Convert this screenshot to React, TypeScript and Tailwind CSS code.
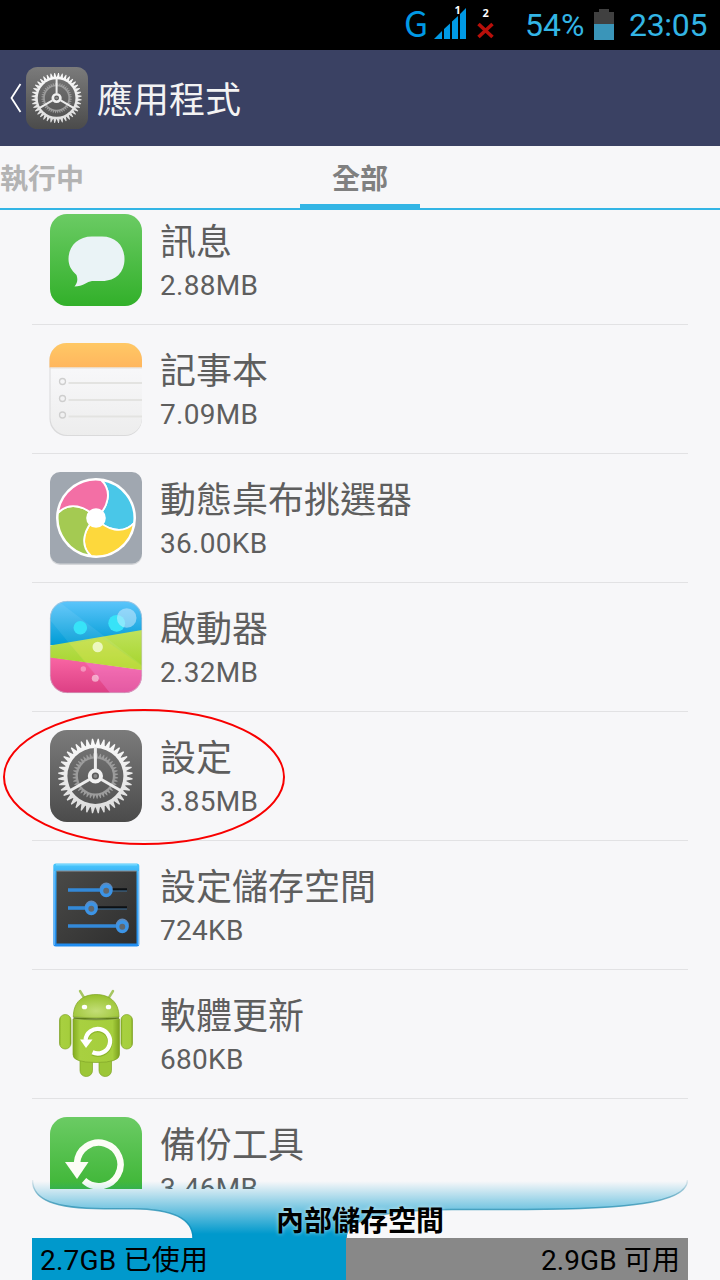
import React from "react";

interface IconProps {
  className?: string;
}

interface AppEntry {
  name: string;
  size: string;
  Icon: React.FC<IconProps>;
}

// Points of a ring of pointed gear teeth around (46, 46)
const gearPoints = (teeth: number, tip: number, root: number) => {
  const points: string[] = [];
  const at = (r: number, step: number) => {
    const a = (step / teeth) * Math.PI * 2 - Math.PI / 2;
    points.push(`${(46 + r * Math.cos(a)).toFixed(2)},${(46 + r * Math.sin(a)).toFixed(2)}`);
  };
  for (let i = 0; i < teeth; i++) {
    at(root, i + 0.08);
    at(tip, i + 0.4);
    at(tip, i + 0.6);
    at(root, i + 0.92);
  }
  return points.join(" ");
};

const SettingsIcon: React.FC<IconProps> = ({ className }) => (
  <svg className={className} viewBox="0 0 92 92">
    <defs>
      <linearGradient id="gear-bg" x1="0" y1="0" x2="0" y2="1">
        <stop offset="0" stopColor="#7b7b7b" />
        <stop offset="1" stopColor="#4b4b4b" />
      </linearGradient>
      <linearGradient id="gear-fg" x1="0" y1="0" x2="0" y2="1">
        <stop offset="0" stopColor="#fafafa" />
        <stop offset="1" stopColor="#dcdcdc" />
      </linearGradient>
      <mask id="gear-ring">
        <rect width="92" height="92" fill="white" />
        <circle cx="46" cy="46" r="28" fill="black" />
      </mask>
      <mask id="gear-inner-ring">
        <rect width="92" height="92" fill="white" />
        <circle cx="46" cy="46" r="17.5" fill="black" />
      </mask>
    </defs>
    <rect width="92" height="92" rx="17" fill="url(#gear-bg)" />
    <g transform="translate(-0.6 0)">
      <polygon points={gearPoints(40, 22.8, 19.5)} fill="#9c9c9c" mask="url(#gear-inner-ring)" />
      <polygon points={gearPoints(40, 37.3, 31.5)} fill="url(#gear-fg)" mask="url(#gear-ring)" />
      <g stroke="#ececec" strokeWidth="3">
        <path d="M46 39V17" />
        <path d="M46 39V17" transform="rotate(120 46 46)" />
        <path d="M46 39V17" transform="rotate(240 46 46)" />
      </g>
      <circle cx="46" cy="46" r="5.6" fill="#5c5c5c" stroke="#f1f1f1" strokeWidth="4" />
      <circle cx="46" cy="46" r="2" fill="#8a8a8a" />
    </g>
  </svg>
);

const MessageIcon: React.FC<IconProps> = ({ className }) => (
  <svg className={className} viewBox="0 0 92 92">
    <defs>
      <linearGradient id="green-bg" x1="0" y1="0" x2="0" y2="1">
        <stop offset="0" stopColor="#6bcb64" />
        <stop offset="1" stopColor="#32b02a" />
      </linearGradient>
    </defs>
    <rect width="92" height="92" rx="17" fill="url(#green-bg)" />
    <path
      d="M42 22.5H52C66 22.5 74.5 32 74.5 45C74.5 58 66 67 52 67H42C37 67.5 33 72.5 24.5 72.5C27.5 69 28 65 26.5 61C21 56 18.5 51 18.5 45C18.5 32 28 22.5 42 22.5Z"
      fill="#eaf3f6"
    />
  </svg>
);

const NotesIcon: React.FC<IconProps> = ({ className }) => (
  <svg className={className} viewBox="0 0 92 92">
    <defs>
      <clipPath id="notes-clip">
        <rect x="-0.5" width="92.5" height="93" rx="17" />
      </clipPath>
      <linearGradient id="notes-top" x1="0" y1="0" x2="0" y2="1">
        <stop offset="0" stopColor="#ffc865" />
        <stop offset="1" stopColor="#ffb65e" />
      </linearGradient>
      <linearGradient id="notes-paper" x1="0" y1="0" x2="0" y2="1">
        <stop offset="0.25" stopColor="#f8f8fa" />
        <stop offset="1" stopColor="#ededed" />
      </linearGradient>
    </defs>
    <g clipPath="url(#notes-clip)">
      <rect x="-1" width="93" height="93" fill="#dadadb" />
      <rect x="0.5" y="-1" width="91.5" height="93" rx="17" fill="url(#notes-paper)" />
      <rect x="-1" width="93" height="24.5" fill="url(#notes-top)" />
      <path d="M0 25H92" stroke="#e3dfdb" strokeWidth="1" />
      {[38.5, 55.5, 72].map((y) => (
        <g key={y} fill="none">
          <path d={`M18.5 ${y + 1.5}H92`} stroke="#e3e3e1" strokeWidth="2" />
          <circle cx="12.5" cy={y} r="3" stroke="#cecece" strokeWidth="1.3" />
        </g>
      ))}
    </g>
  </svg>
);

const WallpaperIcon: React.FC<IconProps> = ({ className }) => (
  <svg className={className} viewBox="0 0 92 92">
    <rect y="1" width="92" height="92" rx="10" fill="#d5d7da" />
    <rect width="92" height="91.5" rx="10" fill="#a0a7b0" />
    <circle cx="46" cy="46" r="40" fill="#ffffff" />
    {["#49c7e8", "#fdd83c", "#a4ca52", "#f36fa5"].map((color, i) => (
      <path
        key={color}
        d="M46 46C58 36 63 19 51 8A38.5 38.5 0 0 1 84 51C73 63 56 58 46 46Z"
        fill={color}
        stroke="#ffffff"
        strokeWidth="1.8"
        transform={`rotate(${i * 90} 46 46)`}
      />
    ))}
    <circle cx="46" cy="46" r="9.8" fill="#ffffff" />
  </svg>
);

const LauncherIcon: React.FC<IconProps> = ({ className }) => (
  <svg className={className} viewBox="0 0 92 92">
    <defs>
      <clipPath id="launcher-clip">
        <rect width="92" height="92" rx="17" />
      </clipPath>
      <linearGradient id="launcher-blue" x1="0" y1="0" x2="0" y2="1">
        <stop offset="0" stopColor="#5cc5fb" />
        <stop offset="1" stopColor="#009cd5" />
      </linearGradient>
      <linearGradient id="launcher-green" x1="0" y1="0" x2="0" y2="1">
        <stop offset="0" stopColor="#bfe25c" />
        <stop offset="1" stopColor="#a4d42a" />
      </linearGradient>
      <linearGradient id="launcher-pink" x1="0" y1="0" x2="0" y2="1">
        <stop offset="0" stopColor="#f966a4" />
        <stop offset="1" stopColor="#dc3f84" />
      </linearGradient>
    </defs>
    <g clipPath="url(#launcher-clip)">
      <rect width="92" height="44" fill="url(#launcher-blue)" />
      <path d="M0 56L92 69V92H0Z" fill="url(#launcher-pink)" />
      <path d="M0 44.5L92 29V69L0 56.5Z" fill="url(#launcher-green)" />
      <path d="M0 0H8L92 64V92H60L0 19Z" fill="#ffffff" opacity="0.08" />
      <path d="M20 43L52 37L92 65V69L36 61.5Z" fill="#e9e339" opacity="0.25" />
      <path d="M36 61.5L92 69V92H60Z" fill="#f37be0" opacity="0.25" />
      <circle cx="30.3" cy="26.7" r="6.8" fill="#37e3f8" />
      <circle cx="66.7" cy="22.3" r="8.4" fill="#37e3f8" />
      <circle cx="76.7" cy="17" r="9.8" fill="#d9f0ff" opacity="0.5" />
      <circle cx="47.7" cy="46" r="5.2" fill="#f3fbd3" opacity="0.85" />
      <circle cx="33.3" cy="68" r="2.7" fill="#ffffff" opacity="0.35" />
      <circle cx="45.3" cy="77.3" r="3.5" fill="#ffffff" opacity="0.5" />
    </g>
    <rect x="0.3" y="0.3" width="91.4" height="91.4" rx="17" fill="none" stroke="#c9c4d2" strokeWidth="0.6" />
  </svg>
);

const StorageSettingsIcon: React.FC<IconProps> = ({ className }) => (
  <svg className={className} viewBox="0 0 92 92">
    <defs>
      <linearGradient id="panel-bg" x1="0" y1="0" x2="1" y2="1">
        <stop offset="0" stopColor="#4a4a48" />
        <stop offset="1" stopColor="#2e2e2e" />
      </linearGradient>
      <linearGradient id="panel-frame" x1="0" y1="0" x2="0" y2="1">
        <stop offset="0" stopColor="#4cc9fb" />
        <stop offset="0.15" stopColor="#35a8f5" />
        <stop offset="1" stopColor="#1f8cf0" />
      </linearGradient>
    </defs>
    <rect x="3.3" y="4.5" width="86" height="83" rx="2.5" fill="url(#panel-frame)" />
    <path d="M6 5.8H87" stroke="#74d6ff" strokeWidth="1.5" />
    <path d="M4.2 12V86M88.4 12V86" stroke="#7cc0f5" strokeWidth="1" />
    <rect x="6.5" y="12" width="80" height="72.5" fill="url(#panel-bg)" />
    <path d="M6.5 12H86.5" stroke="#8b9299" strokeWidth="1.2" />
    {[
      { y: 31, x: 56.2 },
      { y: 49, x: 41.3 },
      { y: 67, x: 72.3 },
    ].map(({ y, x }) => (
      <g key={y} fill="none">
        <path d={`M${x} ${y - 0.5}H77`} stroke="#0d1114" strokeWidth="2.5" />
        <path d={`M${x} ${y + 1}H77`} stroke="#3a6c96" strokeWidth="1" />
        <path d={`M18 ${y}H${x}`} stroke="#3389d8" strokeWidth="3.6" />
        <circle cx={x} cy={y - 1} r="4.9" stroke="#6088b8" strokeWidth="3.2" />
        <circle cx={x} cy={y + 0.7} r="4.7" fill="#62686e" stroke="#3c94e6" strokeWidth="3.5" />
      </g>
    ))}
  </svg>
);

const SoftwareUpdateIcon: React.FC<IconProps> = ({ className }) => (
  <svg className={className} viewBox="0 0 92 92">
    <defs>
      <linearGradient id="robot-body" x1="0" y1="0" x2="1" y2="0">
        <stop offset="0" stopColor="#83ab20" />
        <stop offset="0.15" stopColor="#a8d040" />
        <stop offset="0.85" stopColor="#a5ce3c" />
        <stop offset="1" stopColor="#7ba01d" />
      </linearGradient>
      <radialGradient id="robot-head" cx="0.5" cy="0.7" r="0.7">
        <stop offset="0" stopColor="#c3de77" />
        <stop offset="1" stopColor="#96c02b" />
      </radialGradient>
    </defs>
    <path d="M30 3L34 9.5M63 3L59 9.5" stroke="#a6c662" strokeWidth="2.4" strokeLinecap="round" />
    <g stroke="#7fa326" strokeWidth="0.7">
      <rect x="30" y="65.5" width="12.5" height="23" rx="6" fill="#9cc637" />
      <rect x="49" y="65.5" width="12.5" height="23" rx="6" fill="#9cc637" />
      <rect x="9.5" y="26.5" width="11.5" height="34.5" rx="5.7" fill="url(#robot-body)" />
      <rect x="71" y="26.5" width="11.5" height="34.5" rx="5.7" fill="url(#robot-body)" />
      <path d="M23.3 29C23.3 13.5 33 6.5 46 6.5S69 13.5 69 29Q46 31 23.3 29Z" fill="url(#robot-head)" />
      <path d="M23 31Q46 33 69.5 31V66.5Q69.5 74.5 46 74.5T23 66.5Z" fill="url(#robot-body)" />
    </g>
    <path d="M23.5 30Q46 32 69 30" stroke="#5f7f18" strokeWidth="1.4" fill="none" />
    <ellipse cx="34.5" cy="19" rx="2.7" ry="2.3" fill="#ffffff" />
    <ellipse cx="58.5" cy="19" rx="2.7" ry="2.3" fill="#ffffff" />
    <path d="M35.5 53A12.3 12.3 0 1 1 42.5 65.3" fill="none" stroke="#6d9715" strokeWidth="5" opacity="0.45" />
    <path d="M35.5 52A12.3 12.3 0 1 1 42.5 64.3" fill="none" stroke="#ffffff" strokeWidth="4.3" />
    <path d="M30 51.5H42.5L36 60Z" fill="#ffffff" />
  </svg>
);

const BackupIcon: React.FC<IconProps> = ({ className }) => (
  <svg className={className} viewBox="0 0 92 92">
    <rect width="92" height="92" rx="17" fill="url(#green-bg)" />
    <path d="M27 46A21.8 21.8 0 1 1 34 63.5" fill="none" stroke="#fcfdf6" strokeWidth="6.5" />
    <path d="M15 45H38.5L27 62Z" fill="#fcfdf6" />
  </svg>
);

const APPS: AppEntry[] = [
  { name: "訊息", size: "2.88MB", Icon: MessageIcon },
  { name: "記事本", size: "7.09MB", Icon: NotesIcon },
  { name: "動態桌布挑選器", size: "36.00KB", Icon: WallpaperIcon },
  { name: "啟動器", size: "2.32MB", Icon: LauncherIcon },
  { name: "設定", size: "3.85MB", Icon: SettingsIcon },
  { name: "設定儲存空間", size: "724KB", Icon: StorageSettingsIcon },
  { name: "軟體更新", size: "680KB", Icon: SoftwareUpdateIcon },
  { name: "備份工具", size: "3.46MB", Icon: BackupIcon },
];

const StatusBar: React.FC = () => (
  <div className="flex h-[50px] shrink-0 items-center bg-black pl-[403px] text-[32px] leading-[52px] text-[#33b5e5]">
    <span className="h-[50px] w-[31px] pl-px font-['Noto_Sans_CJK_TC'] text-[35px] leading-[43px] text-[#0099e5]">G</span>
    <svg className="h-[50px] w-[70px]" viewBox="0 0 70 50">
      <path d="M0 39L8 31V39ZM10 29L16 23.5V39H10ZM18 21.5L24 16V39H18ZM26 14L32 8V39H26Z" fill="#0099e5" />
      <path d="M44.5 24L58.5 37M58.5 24L44.5 37" stroke="#b80f0a" strokeWidth="3.6" />
      <g fill="#ffffff" fontFamily="Open Sans" fontWeight="700" fontSize="11">
        <text x="20.5" y="14" stroke="#000000" strokeWidth="1.5" paintOrder="stroke">1</text>
        <text x="48.5" y="17">2</text>
      </g>
    </svg>
    <span className="ml-[21px] w-[69px]">54%</span>
    <svg className="h-[50px] w-5" viewBox="0 0 20 50">
      <path d="M0 12H5V9H15V12H20V24H0Z" fill="#404040" />
      <path d="M0 24H20V40H0Z" fill="#3a95b9" />
    </svg>
    <span className="ml-[15px] tracking-[-0.3px]">23:05</span>
  </div>
);

const Header: React.FC = () => (
  <div className="flex h-24 shrink-0 items-center bg-[#3a4163] pl-2.5">
    <svg className="h-[30px] w-4" viewBox="0 0 16 30" fill="none" stroke="#ffffff" strokeWidth="1.8">
      <path d="M10.5 1L1.5 15L10.5 29" />
    </svg>
    <SettingsIcon className="h-[62px] w-[62px]" />
    <h1 className="ml-[9px] pt-[5px] text-[36px] leading-[48px] text-[#f3f3f3]">應用程式</h1>
  </div>
);

const Tabs: React.FC = () => (
  <div className="flex h-16 shrink-0 border-b-2 border-[#33b5e5] text-[28px] leading-[68px] font-bold">
    <div className="w-[300px] text-[#b3b3b3]">執行中</div>
    <div className="h-[62px] w-[120px] border-b-4 border-[#33b5e5] text-center text-[#808080]">全部</div>
  </div>
);

const AppRow: React.FC<{ app: AppEntry }> = ({ app }) => (
  <li className="flex h-[129px] items-center border-b border-[#e2e2e4] pl-[18px]">
    <app.Icon className="h-[92px] w-[92px] shrink-0 overflow-visible" />
    <div className="ml-[18px] pt-[5px] text-[#5e5e5e]">
      <div className="text-[36px] leading-[46px]">{app.name}</div>
      <div className="text-[28px] leading-[40px] tracking-[0.3px]">{app.size}</div>
    </div>
  </li>
);

const StorageBar: React.FC = () => (
  <div className="relative mx-8 -mt-[9px] shrink-0">
    <div className="grid h-[58px]">
      <svg className="col-start-1 row-start-1 h-[58px] w-[656px]" viewBox="0 0 656 58">
        <defs>
          <linearGradient id="swoosh" x1="0" y1="0" x2="0" y2="58" gradientUnits="userSpaceOnUse">
            <stop offset="0.02" stopColor="#0099cc" stopOpacity="0" />
            <stop offset="0.93" stopColor="#0099cc" />
          </linearGradient>
          <linearGradient id="swoosh-edge" x1="0" y1="0" x2="0" y2="58" gradientUnits="userSpaceOnUse">
            <stop offset="0" stopColor="#2c7d9c" stopOpacity="0.1" />
            <stop offset="0.4" stopColor="#2c8dae" stopOpacity="0.7" />
            <stop offset="1" stopColor="#0090c2" />
          </linearGradient>
        </defs>
        <path
          d="M0 0C0 20 22 28.5 72 28.7H101C140 29 161 38 161 58H314C314 42 340 30 420 29.5H494C590 29 656 24 656 0Z"
          fill="url(#swoosh)"
        />
        <g fill="none" stroke="url(#swoosh-edge)" strokeWidth="1.5">
          <path d="M0.5 0C0.5 20 22 28.5 72 28.7H101C140 29 161 38 161 58" />
          <path d="M314 58C314 42 340 30 420 29.5H494C590 29 655.5 24 655.5 0" />
        </g>
      </svg>
      <div className="col-start-1 row-start-1 mt-[22px] h-9 text-center text-[28px] leading-[40px] font-bold text-black [text-shadow:0_0_4px_#ffffff99]">
        內部儲存空間
      </div>
    </div>
    <div className="flex h-[42px] bg-[#888888] text-[28px] leading-[46px] text-black">
      <div className="w-[314px] bg-[#0099cc] pl-2 tracking-[0.2px]">2.7GB 已使用</div>
      <div className="flex-1 pr-2 text-right tracking-[0.1px]">2.9GB 可用</div>
    </div>
  </div>
);

const App: React.FC = () => (
  <div className="relative flex h-[1280px] w-[720px] flex-col overflow-hidden bg-[#f7f7f9] font-[Roboto,'Noto_Sans_CJK_TC',sans-serif]">
    <StatusBar />
    <Header />
    <Tabs />
    <div className="h-[979px] shrink-0 overflow-hidden px-8">
      <ul className="-mt-3.5">
        {APPS.map((app) => (
          <AppRow key={app.name} app={app} />
        ))}
      </ul>
    </div>
    <StorageBar />

    {/* Hand-drawn marker around the settings entry */}
    <svg className="absolute top-[707px] left-0 h-[140px] w-[290px]" viewBox="0 0 290 140" fill="none">
      <ellipse cx="144" cy="70" rx="140" ry="67" stroke="#f80000" strokeWidth="2" />
    </svg>
  </div>
);

export default App;
